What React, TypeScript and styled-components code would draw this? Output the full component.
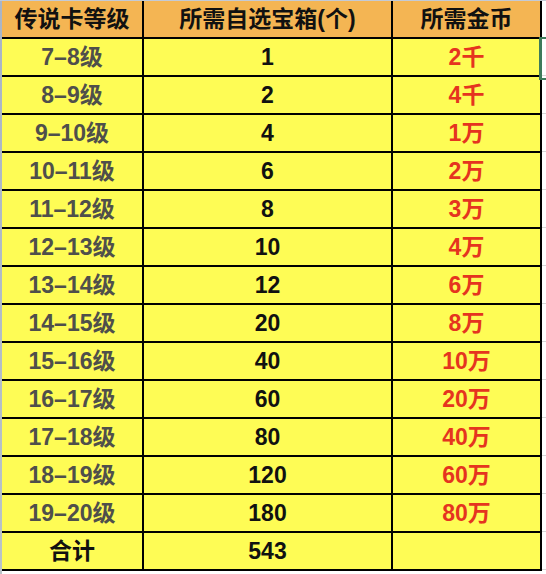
import React from "react";
import styled, { createGlobalStyle } from "styled-components";

const GlobalStyle = createGlobalStyle`
    html, body {
        margin: 0;
        padding: 0;
        background: #ffffff;
    }
`;

const FONT = `"Liberation Sans", "Noto Sans CJK SC", sans-serif`;

type Tone = "grey" | "black" | "red";

const TONES: Record<Tone, string> = {
    grey: "#4f4f4b",
    black: "#111111",
    red: "#e5341f",
};

const rows: Array<[string, string, string]> = [
    ["7–8级", "1", "2千"],
    ["8–9级", "2", "4千"],
    ["9–10级", "4", "1万"],
    ["10–11级", "6", "2万"],
    ["11–12级", "8", "3万"],
    ["12–13级", "10", "4万"],
    ["13–14级", "12", "6万"],
    ["14–15级", "20", "8万"],
    ["15–16级", "40", "10万"],
    ["16–17级", "60", "20万"],
    ["17–18级", "80", "40万"],
    ["18–19级", "120", "60万"],
    ["19–20级", "180", "80万"],
];

const Sheet = styled.div`
    position: relative;
    width: 546px;
    height: 574px;
    overflow: hidden;
    background: #ffffff;
    border-top: 1px solid #c3cad6;
    box-sizing: border-box;
    display: flex;
    align-items: flex-start;
`;

const Gutter = styled.div`
    width: 2px;
    align-self: stretch;
    background: linear-gradient(#a9b4c6, #b9c3c8);
`;

const Grid = styled.div`
    display: grid;
    grid-template-columns: 140px 247px 147px;
    grid-auto-rows: 36px;
    gap: 2px;
    padding: 0 2px 2px 0;
    background: #000000;
`;

const Cell = styled.div<{ $head?: boolean; $tone?: Tone }>`
    display: flex;
    align-items: center;
    justify-content: center;
    background: ${(p) => (p.$head ? "#f4b553" : "#fefc55")};
    color: ${(p) => TONES[p.$tone ?? "black"]};
    font-family: ${FONT};
    font-weight: 700;
    font-size: 23px;
    line-height: 1;
    white-space: nowrap;
`;

const Margin = styled.div`
    flex: 1;
    height: 571px;
    background: repeating-linear-gradient(
        to bottom,
        transparent 0,
        transparent 36px,
        #d6d6d6 36px,
        #d6d6d6 37px,
        transparent 37px,
        transparent 38px
    );
`;

const Selection = styled.div`
    position: absolute;
    left: 539px;
    top: 36px;
    width: 12px;
    height: 43px;
    border: 2px solid #3d7b5b;
    border-left-width: 3px;
    box-sizing: border-box;
`;

export default function App() {
    return (
        <>
            <GlobalStyle />
            <Sheet>
                <Gutter />
                <Grid>
                    <Cell $head>传说卡等级</Cell>
                    <Cell $head>所需自选宝箱(个)</Cell>
                    <Cell $head>所需金币</Cell>
                    {rows.map(([level, boxes, coins]) => (
                        <React.Fragment key={level}>
                            <Cell $tone="grey">{level}</Cell>
                            <Cell>{boxes}</Cell>
                            <Cell $tone="red">{coins}</Cell>
                        </React.Fragment>
                    ))}
                    <Cell>合计</Cell>
                    <Cell>543</Cell>
                    <Cell />
                </Grid>
                <Margin />
                <Selection />
            </Sheet>
        </>
    );
}
